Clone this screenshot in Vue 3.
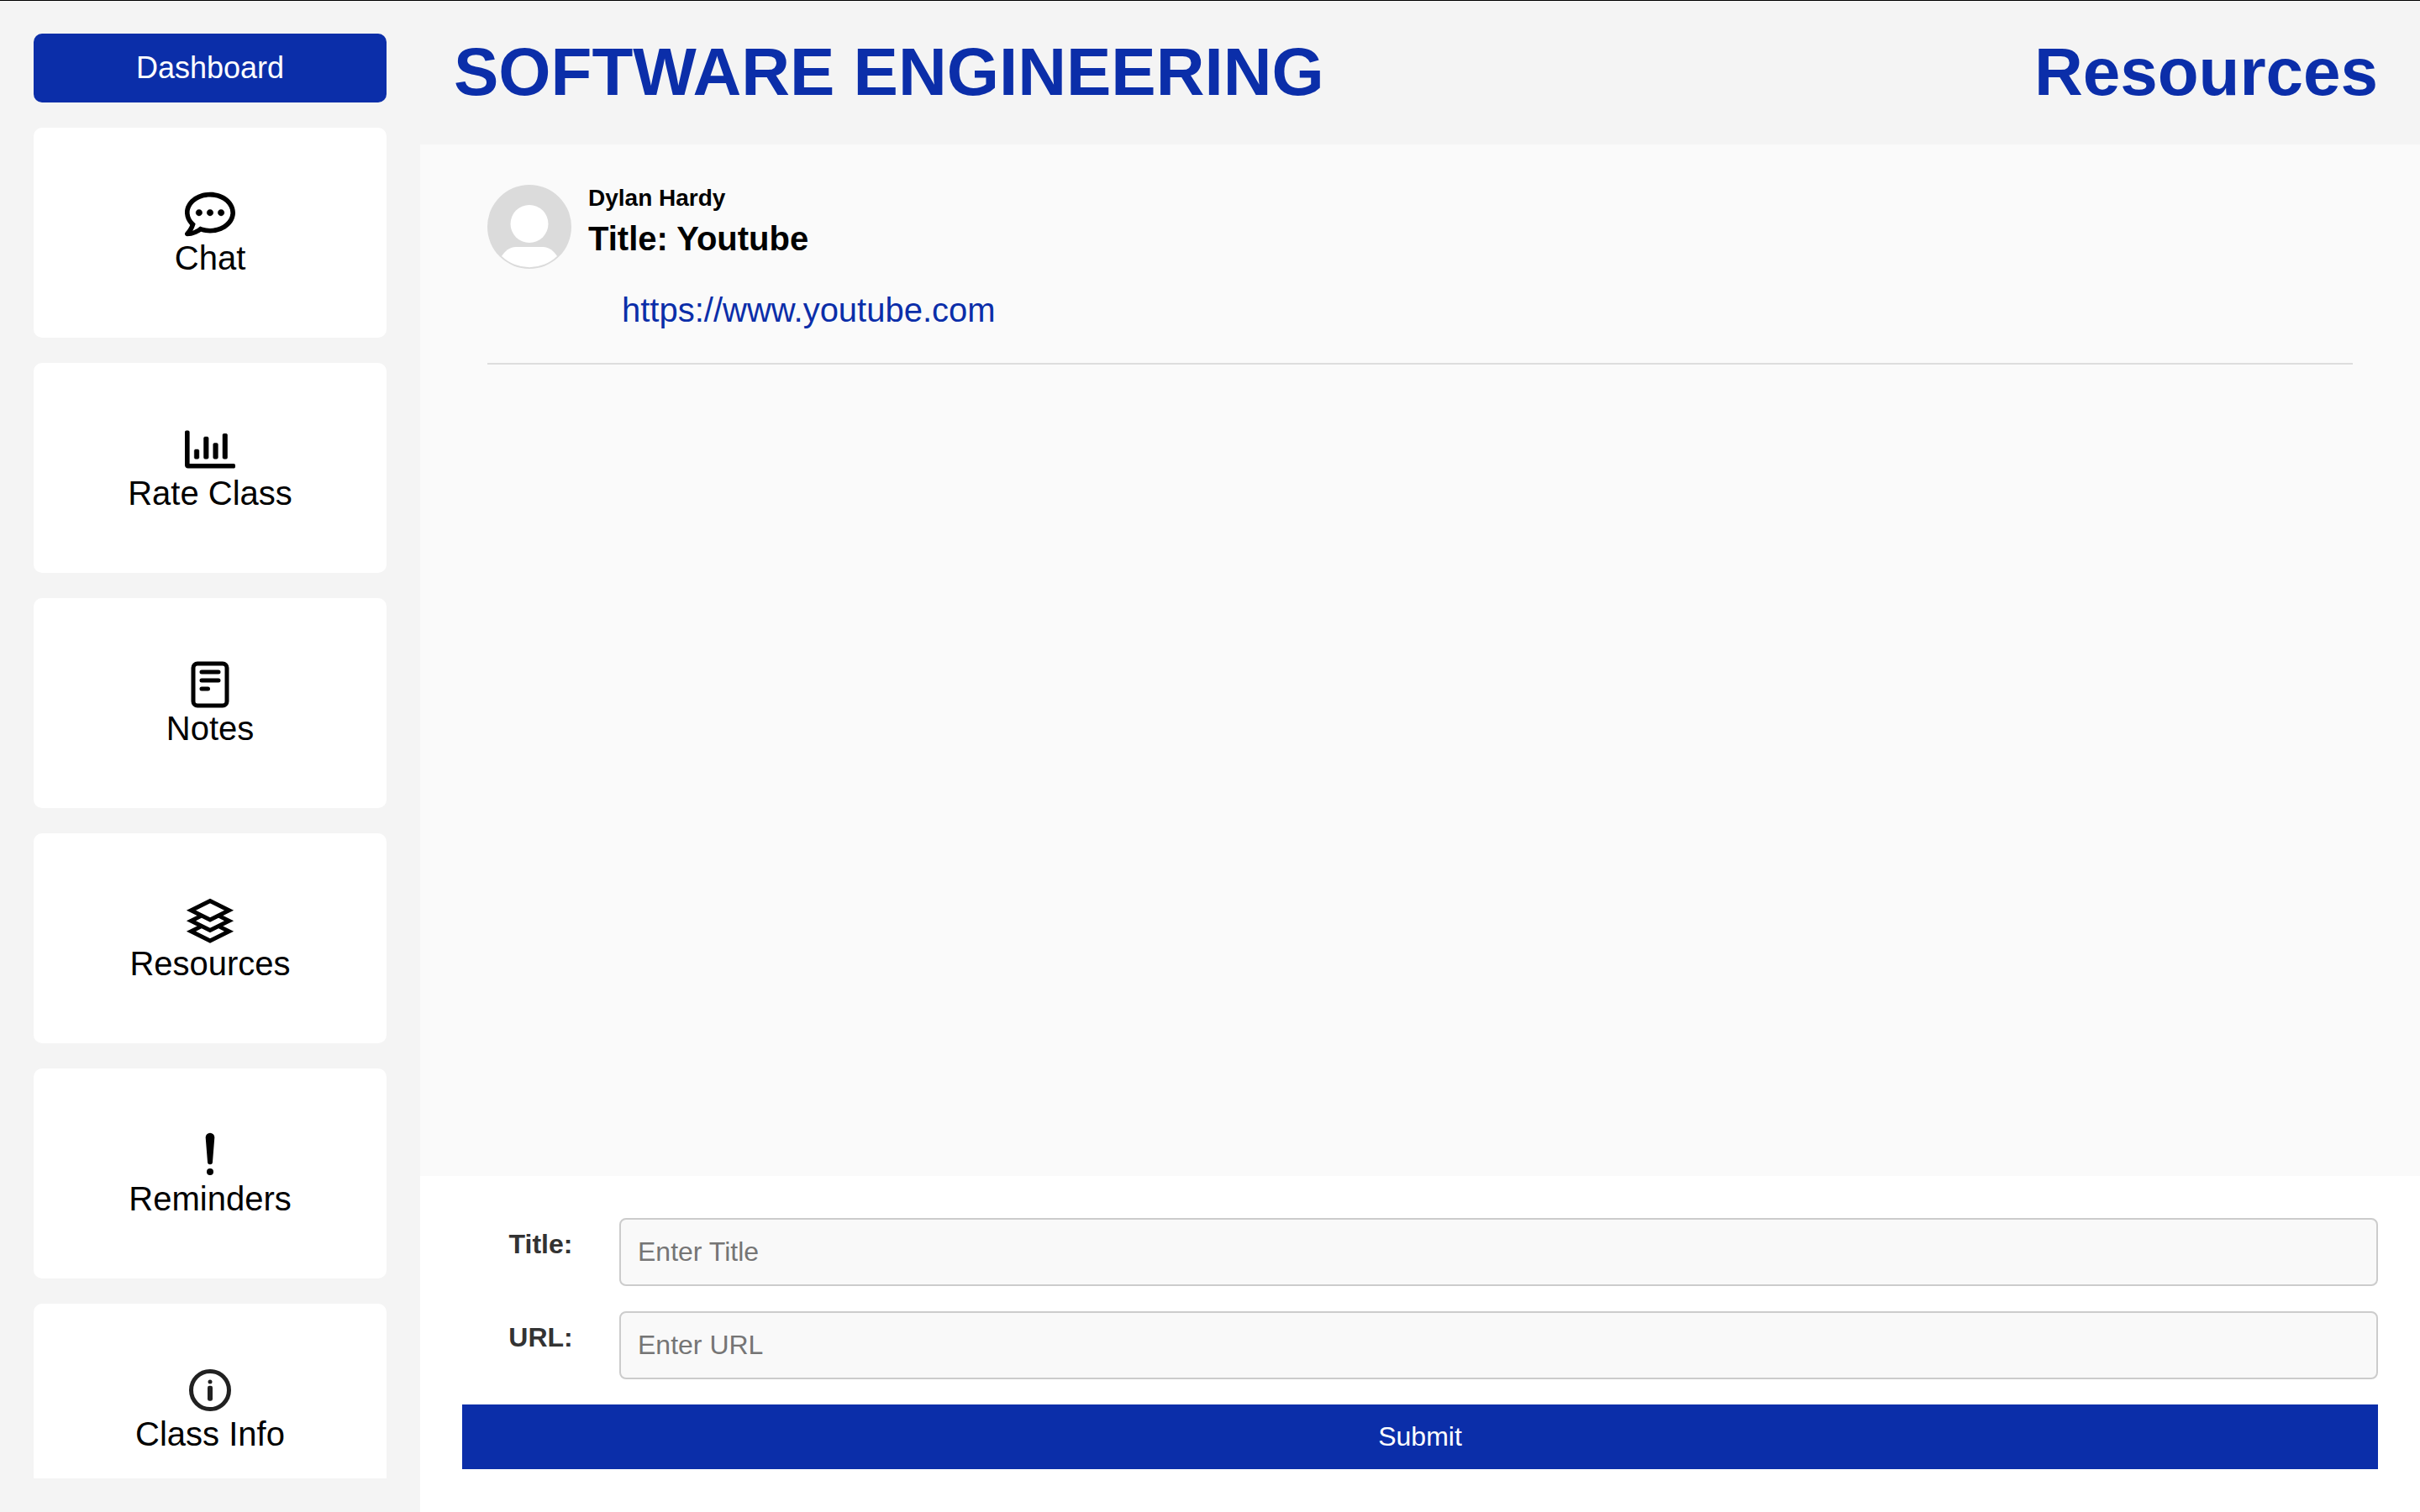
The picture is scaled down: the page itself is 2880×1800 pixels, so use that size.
<script setup>
import { ref } from 'vue'

const links = [
  { id: 'chat', label: 'Chat' },
  { id: 'rate', label: 'Rate Class' },
  { id: 'notes', label: 'Notes' },
  { id: 'resources', label: 'Resources' },
  { id: 'reminders', label: 'Reminders' },
  { id: 'info', label: 'Class Info' },
]

const resources = ref([
  { author: 'Dylan Hardy', title: 'Youtube', url: 'https://www.youtube.com' },
])

const title = ref('')
const url = ref('')

function submit() {
  if (!title.value || !url.value) return
  resources.value.push({ author: 'Dylan Hardy', title: title.value, url: url.value })
  title.value = ''
  url.value = ''
}
</script>

<template>
  <div class="app">
    <aside class="sidebar">
      <button class="dashboard" type="button">Dashboard</button>
      <nav class="links">
        <a v-for="link in links" :key="link.id" class="card" :href="'#' + link.id">
          <svg v-if="link.id === 'chat'" class="icon" viewBox="0 0 512 512" fill="currentColor" aria-hidden="true">
            <path stroke="currentColor" stroke-width="4" d="M144 208c-17.7 0-32 14.3-32 32s14.3 32 32 32 32-14.3 32-32-14.3-32-32-32zm112 0c-17.7 0-32 14.3-32 32s14.3 32 32 32 32-14.3 32-32-14.3-32-32-32zm112 0c-17.7 0-32 14.3-32 32s14.3 32 32 32 32-14.3 32-32-14.3-32-32-32z" />
            <path d="M256 32C114.6 32 0 125.1 0 240c0 47.6 19.9 91.2 52.9 126.3C38 405.7 7 439.1 6.5 439.5c-6.6 7-8.4 17.2-4.6 26S14.4 480 24 480c61.5 0 110-25.7 139.1-46.3C192 442.8 223.2 448 256 448c141.4 0 256-93.1 256-208S397.4 32 256 32zm0 368c-26.7 0-53.1-4.1-78.4-12.1l-22.7-7.2-19.5 13.8c-14.3 10.1-33.9 21.4-57.5 29 7.3-12.1 14.4-25.7 19.9-40.2l10.6-28.1-20.6-21.8C69.7 314.1 48 282.2 48 240c0-88.2 93.3-160 208-160s208 71.8 208 160-93.3 160-208 160z" />
          </svg>
          <svg v-else-if="link.id === 'rate'" class="icon" viewBox="0 0 512 512" fill="currentColor" aria-hidden="true">
            <path d="M496 400H48V80c0-8.84-7.16-16-16-16H16C7.16 64 0 71.16 0 80v336c0 17.67 14.33 32 32 32h464c8.84 0 16-7.16 16-16v-16c0-8.84-7.16-16-16-16z" />
            <path stroke="currentColor" stroke-width="4" d="M396.8 352h22.4c6.4 0 12.8-6.4 12.8-12.8V108.8c0-6.4-6.4-12.8-12.8-12.8h-22.4c-6.4 0-12.8 6.4-12.8 12.8v230.4c0 6.4 6.4 12.8 12.8 12.8zm-192 0h22.4c6.4 0 12.8-6.4 12.8-12.8V140.8c0-6.4-6.4-12.8-12.8-12.8h-22.4c-6.4 0-12.8 6.4-12.8 12.8v198.4c0 6.4 6.4 12.8 12.8 12.8zm96 0h22.4c6.4 0 12.8-6.4 12.8-12.8V204.8c0-6.4-6.4-12.8-12.8-12.8h-22.4c-6.4 0-12.8 6.4-12.8 12.8v134.4c0 6.4 6.4 12.8 12.8 12.8zM108.8 352h22.4c6.4 0 12.8-6.4 12.8-12.8v-70.4c0-6.4-6.4-12.8-12.8-12.8h-22.4c-6.4 0-12.8 6.4-12.8 12.8v70.4c0 6.4 6.4 12.8 12.8 12.8z" />
          </svg>
          <svg v-else-if="link.id === 'notes'" class="icon" viewBox="0 0 24 24" fill="none" stroke="currentColor" stroke-width="2" stroke-linecap="round" aria-hidden="true">
            <rect x="4" y="2" width="16" height="20" rx="2" />
            <path d="M8 6h8M8 10h8M8 14h3" />
          </svg>
          <svg v-else-if="link.id === 'resources'" class="icon" viewBox="0 0 24 24" fill="none" stroke="currentColor" stroke-width="2" aria-hidden="true">
            <path d="M12 3l9 4.5-9 4.5-9-4.5zM7.5 10.25L3 12.5l9 4.5 9-4.5-4.5-2.25M7.5 15.25L3 17.5l9 4.5 9-4.5-4.5-2.25" />
          </svg>
          <svg v-else-if="link.id === 'reminders'" class="icon" viewBox="0 0 180 180" fill="currentColor" aria-hidden="true">
            <path d="M74 27A16 16 0 0 1 106 27L99 115A9 9 0 0 1 81 115Z" />
            <circle cx="90" cy="150" r="12" />
          </svg>
          <svg v-else class="icon icon-info" viewBox="0 0 24 24" fill="none" stroke="currentColor" stroke-width="2" aria-hidden="true">
            <circle cx="12" cy="12" r="9" />
            <circle cx="12" cy="8" r="1" fill="currentColor" stroke="none" />
            <rect x="10.8" y="9.9" width="2.4" height="7.2" rx=".9" fill="currentColor" stroke="none" />
          </svg>
          <span>{{ link.label }}</span>
        </a>
      </nav>
    </aside>

    <main class="main">
      <header class="header">
        <h1>SOFTWARE ENGINEERING</h1>
        <h1>Resources</h1>
      </header>

      <section class="content">
        <article v-for="(item, i) in resources" :key="i" class="resource">
          <svg class="avatar" viewBox="0 0 100 100" aria-hidden="true">
            <circle cx="50" cy="50" r="50" fill="#dbdbdb" />
            <circle cx="50" cy="46.5" r="22.5" fill="#fff" />
            <path d="M17 85C21 79 26 74 34 74H66C74 74 79 79 83 85A48 48 0 0 1 17 85Z" fill="#fff" />
          </svg>
          <div class="details">
            <h3 class="author">{{ item.author }}</h3>
            <h2 class="title">Title: {{ item.title }}</h2>
            <a class="url" :href="item.url">{{ item.url }}</a>
          </div>
        </article>
      </section>

      <form class="form" @submit.prevent="submit">
        <div class="row">
          <label for="title">Title:</label>
          <input id="title" v-model="title" type="text" placeholder="Enter Title" />
        </div>
        <div class="row">
          <label for="url">URL:</label>
          <input id="url" v-model="url" type="text" placeholder="Enter URL" />
        </div>
        <button class="submit" type="submit">Submit</button>
      </form>
    </main>
  </div>
</template>

<style>
body {
  margin: 0;
}
</style>

<style scoped>
* {
  box-sizing: border-box;
}

.app {
  display: flex;
  height: 100vh;
  border-top: 1px solid #000;
  background: #f4f4f4;
  color: #000;
  font-family: Arial, "Liberation Sans", sans-serif;
}

button,
input {
  font-family: inherit;
}

h1,
h2,
h3 {
  margin: 0;
}

.sidebar {
  display: flex;
  flex-direction: column;
  flex: 0 0 500px;
  gap: 30px;
  padding: 39px 40px 40px;
}

.dashboard {
  flex-shrink: 0;
  padding: 20px;
  border: 0;
  border-radius: 10px;
  background: #0b2ea9;
  color: #fff;
  font-size: 36px;
  line-height: 42px;
}

.links {
  display: flex;
  flex: 1;
  flex-direction: column;
  gap: 30px;
  min-height: 0;
  overflow: hidden;
}

.card {
  display: flex;
  flex-direction: column;
  flex-shrink: 0;
  align-items: center;
  padding: 73px 20px;
  border-radius: 10px;
  background: #fff;
  color: #000;
  font-size: 40px;
  line-height: 44px;
  text-decoration: none;
}

.icon {
  display: block;
  width: 60px;
  height: 60px;
}

.icon-info {
  color: #212121;
}

.main {
  display: flex;
  flex: 1;
  flex-direction: column;
  min-width: 0;
}

.header {
  display: flex;
  justify-content: space-between;
  padding: 39px 50px 40px 40px;
  color: #0b2ea9;
}

.header h1 {
  font-size: 80px;
  line-height: 92px;
}

.content {
  flex: 1;
  min-height: 0;
  padding: 48px 80px;
  overflow: hidden;
  background: #fafafa;
}

.resource {
  display: flex;
  gap: 20px;
  padding-bottom: 40px;
  border-bottom: 2px solid #ddd;
}

.avatar {
  flex: 0 0 100px;
  height: 100px;
}

.details {
  display: flex;
  flex-direction: column;
  align-items: flex-start;
}

.author {
  font-size: 28px;
  line-height: 32px;
}

.title {
  margin-top: 9px;
  font-size: 40px;
  line-height: 46px;
}

.url {
  margin: 39px 40px 0;
  color: #0b2ea9;
  font-size: 40px;
  line-height: 46px;
  text-decoration: none;
}

.form {
  display: flex;
  flex-direction: column;
  gap: 30px;
  padding: 50px 50px 51px;
  background: #fff;
}

.row {
  display: flex;
}

.row label {
  flex: 0 0 187px;
  padding-top: 13px;
  color: #333;
  font-size: 32px;
  font-weight: bold;
  line-height: 37px;
  text-align: center;
}

.row input {
  flex: 1;
  min-width: 0;
  height: 81px;
  padding: 20px;
  border: 2px solid #ccc;
  border-radius: 8px;
  background: #f9f9f9;
  font-size: 32px;
}

.row input::placeholder {
  color: #757575;
}

.submit {
  padding: 20px;
  border: 0;
  background: #0b2ea9;
  color: #fff;
  font-size: 32px;
  line-height: 37px;
}
</style>
